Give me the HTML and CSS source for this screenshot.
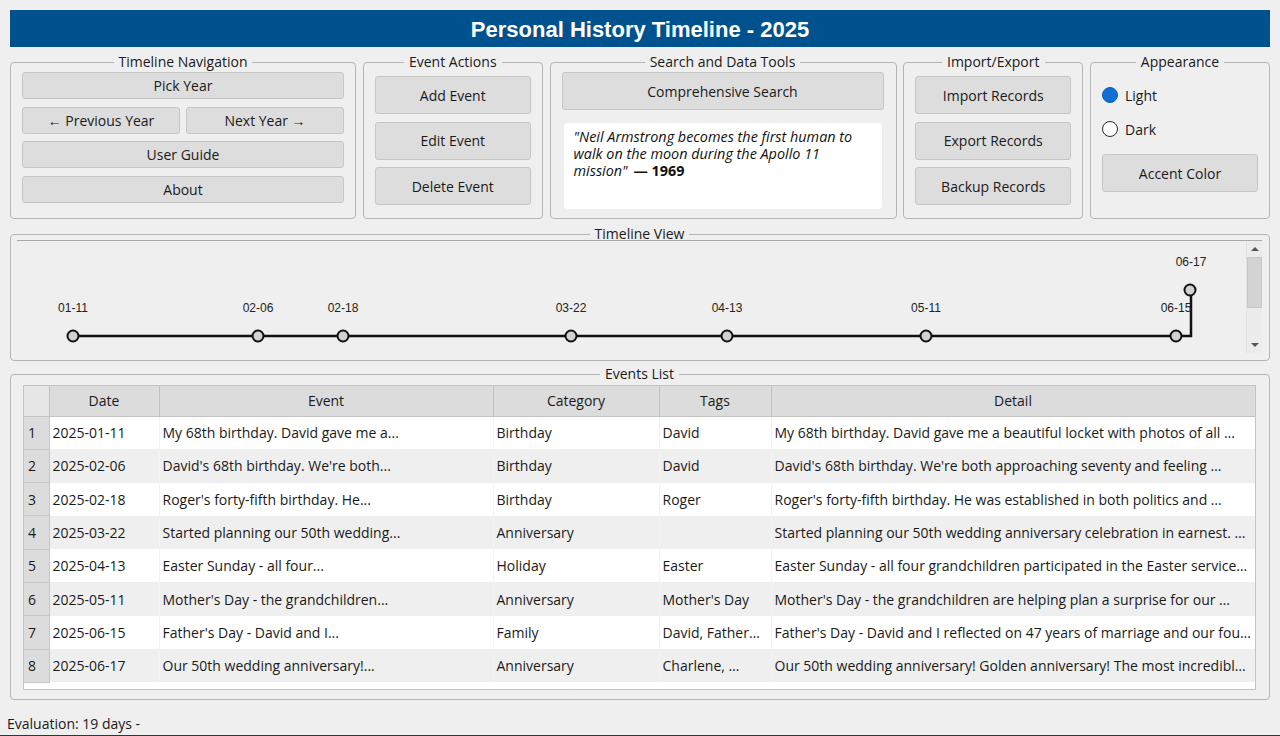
FILE: index.html
```html
<!DOCTYPE html>
<html>
<head>
<meta charset="utf-8">
<title>Personal History Timeline - 2025</title>
<link rel="stylesheet" href="styles.css">
</head>
<body>
<div class="app">
  <header class="titlebar">Personal History Timeline - 2025</header>

  <div class="toprow">
    <fieldset class="group nav">
      <legend>Timeline Navigation</legend>
      <button class="btn h27">Pick Year</button>
      <div class="pair">
        <button class="btn h27">← Previous Year</button>
        <button class="btn h27">Next Year →</button>
      </div>
      <button class="btn h27">User Guide</button>
      <button class="btn h27">About</button>
    </fieldset>

    <fieldset class="group actions">
      <legend>Event Actions</legend>
      <button class="btn h38">Add Event</button>
      <button class="btn h38">Edit Event</button>
      <button class="btn h38">Delete Event</button>
    </fieldset>

    <fieldset class="group search">
      <legend>Search and Data Tools</legend>
      <button class="btn h38">Comprehensive Search</button>
      <div class="quote"><span>"Neil Armstrong becomes the first human to walk on the moon during the Apollo 11</span> <span>mission"</span> <strong>— 1969</strong></div>
    </fieldset>

    <fieldset class="group actions">
      <legend>Import/Export</legend>
      <button class="btn h38">Import Records</button>
      <button class="btn h38">Export Records</button>
      <button class="btn h38">Backup Records</button>
    </fieldset>

    <fieldset class="group appearance">
      <legend>Appearance</legend>
      <label class="radio"><span class="dot on"></span>Light</label>
      <label class="radio"><span class="dot"></span>Dark</label>
      <button class="btn h38 accent">Accent Color</button>
    </fieldset>
  </div>

  <fieldset class="group timeline">
    <legend>Timeline View</legend>
    <div class="scrollarea">
      <svg class="tl" width="1229" height="111" viewBox="0 0 1229 111">
        <path d="M56 95 H1174 V49" fill="none" stroke="#111" stroke-width="2.5"/>
        <g fill="#d2d2d2" stroke="#111" stroke-width="2">
          <circle cx="56" cy="95" r="5.5"/>
          <circle cx="241" cy="95" r="5.5"/>
          <circle cx="326" cy="95" r="5.5"/>
          <circle cx="554" cy="95" r="5.5"/>
          <circle cx="710" cy="95" r="5.5"/>
          <circle cx="909" cy="95" r="5.5"/>
          <circle cx="1159" cy="95" r="5.5"/>
          <circle cx="1173" cy="49" r="5.5"/>
        </g>
        <g class="lbl" text-anchor="middle">
          <text x="56" y="71">01-11</text>
          <text x="241" y="71">02-06</text>
          <text x="326" y="71">02-18</text>
          <text x="554" y="71">03-22</text>
          <text x="710" y="71">04-13</text>
          <text x="909" y="71">05-11</text>
          <text x="1159" y="71">06-15</text>
          <text x="1174" y="25">06-17</text>
        </g>
      </svg>
      <div class="vscroll">
        <div class="arrow up"></div>
        <div class="thumb"></div>
        <div class="track"></div>
        <div class="arrow down"></div>
      </div>
    </div>
  </fieldset>

  <fieldset class="group events">
    <legend>Events List</legend>
    <div class="tablewrap">
      <table class="grid">
        <colgroup>
          <col class="c-num"><col class="c-date"><col class="c-event"><col class="c-cat"><col class="c-tags"><col class="c-detail">
        </colgroup>
        <thead>
          <tr><th class="corner"></th><th>Date</th><th>Event</th><th>Category</th><th>Tags</th><th>Detail</th></tr>
        </thead>
        <tbody>
          <tr><th>1</th><td>2025-01-11</td><td>My 68th birthday. David gave me a...</td><td>Birthday</td><td>David</td><td>My 68th birthday. David gave me a beautiful locket with photos of all …</td></tr>
          <tr class="alt"><th>2</th><td>2025-02-06</td><td>David's 68th birthday. We're both...</td><td>Birthday</td><td>David</td><td>David's 68th birthday. We're both approaching seventy and feeling …</td></tr>
          <tr><th>3</th><td>2025-02-18</td><td>Roger's forty-fifth birthday. He...</td><td>Birthday</td><td>Roger</td><td>Roger's forty-fifth birthday. He was established in both politics and …</td></tr>
          <tr class="alt"><th>4</th><td>2025-03-22</td><td>Started planning our 50th wedding...</td><td>Anniversary</td><td></td><td>Started planning our 50th wedding anniversary celebration in earnest. …</td></tr>
          <tr><th>5</th><td>2025-04-13</td><td>Easter Sunday - all four...</td><td>Holiday</td><td>Easter</td><td>Easter Sunday - all four grandchildren participated in the Easter service…</td></tr>
          <tr class="alt"><th>6</th><td>2025-05-11</td><td>Mother's Day - the grandchildren...</td><td>Anniversary</td><td>Mother's Day</td><td>Mother's Day - the grandchildren are helping plan a surprise for our …</td></tr>
          <tr><th>7</th><td>2025-06-15</td><td>Father's Day - David and I...</td><td>Family</td><td>David, Father…</td><td>Father's Day - David and I reflected on 47 years of marriage and our fou…</td></tr>
          <tr class="alt"><th>8</th><td>2025-06-17</td><td>Our 50th wedding anniversary!...</td><td>Anniversary</td><td>Charlene, …</td><td>Our 50th wedding anniversary! Golden anniversary! The most incredibl…</td></tr>
        </tbody>
      </table>
    </div>
  </fieldset>

  <div class="statusbar">Evaluation: 19 days -</div>
</div>
</body>
</html>
```

FILE: styles.css
```css
* { box-sizing: border-box; }
html, body { margin: 0; padding: 0; }
body {
  width: 1280px;
  height: 736px;
  overflow: hidden;
  background: #efefef;
  font-family: "Open Sans", "Noto Sans", sans-serif;
  font-size: 14px;
  color: #1a1a1a;
}
.app {
  height: 736px;
  padding: 10px 10px 0;
  display: flex;
  flex-direction: column;
  border-bottom: 1px solid #333;
}
.titlebar {
  height: 37px;
  background: #00528f;
  color: #fff;
  font-family: "Liberation Sans", Arial, sans-serif;
  font-weight: bold;
  font-size: 22px;
  line-height: 39px;
  text-align: center;
  margin-bottom: 7px;
}

/* group boxes */
.group {
  margin: 0;
  border: 1px solid #b4b4b4;
  border-radius: 4px;
  min-width: 0;
}
.group > legend {
  margin: 0 auto;
  padding: 0 5px;
  font-size: 14px;
  line-height: 16px;
  color: #1a1a1a;
}

.toprow {
  display: grid;
  grid-template-columns: 346px 180px 347px 180px 180px;
  column-gap: 6.75px;
  height: 165px;
}

.btn {
  display: block;
  width: 100%;
  margin: 0;
  font-family: inherit;
  font-size: 14px;
  color: #1a1a1a;
  background: #dddddd;
  border: 1px solid #c6c6c6;
  border-radius: 3px;
  padding: 0;
}
.h27 { height: 27px; }
.h38 { height: 38px; }

.nav {
  padding: 2px 11px 0;
  display: flex;
  flex-direction: column;
  gap: 7.67px;
}
.pair {
  display: grid;
  grid-template-columns: 1fr 1fr;
  column-gap: 6px;
}

.actions {
  padding: 6px 11px 0;
}
.actions .btn + .btn { margin-top: 7.5px; }

.search {
  padding: 2px 12px 0 11px;
}
.quote {
  margin: 13px 2px 0;
  height: 86px;
  background: #fff;
  border-radius: 4px;
  padding: 5px 22px 3px 10px;
  font-size: 14.4px;
  font-style: italic;
  line-height: 17px;
  color: #111;
}
.quote strong {
  font-style: normal;
  font-weight: bold;
  margin-left: 2px;
}

.appearance {
  padding: 16px 11px 0;
}
.radio {
  display: flex;
  align-items: center;
  height: 18px;
  gap: 7px;
  margin-bottom: 16px;
  font-size: 14px;
}
.dot {
  width: 16px;
  height: 16px;
  border-radius: 50%;
  border: 1.5px solid #2a2a2a;
  background: #fff;
  flex: none;
}
.dot.on {
  background: #0f6fd6;
  border-color: #0c5fb8;
}
.accent { margin-top: 2px; }

/* timeline */
.timeline {
  margin-top: 7px;
  padding: 0 7px 7px 6px;
}
.scrollarea {
  margin-top: -2px;
  border-top: 1px solid #a9a9a9;
  height: 113px;
  display: flex;
}
.tl { display: block; flex: none; }
.tl .lbl text {
  font-family: "Liberation Sans", Arial, sans-serif;
  font-size: 12px;
  fill: #222;
}
.vscroll {
  width: 16px;
  flex: none;
  display: flex;
  flex-direction: column;
  background: #ebebeb;
  border-left: 1px solid #e2e2e2;
}
.arrow {
  height: 16px;
  position: relative;
  background: #ececec;
}
.arrow::after {
  content: "";
  position: absolute;
  left: 4px;
  top: 6px;
  border-left: 4px solid transparent;
  border-right: 4px solid transparent;
}
.arrow.up::after { border-bottom: 4px solid #555; }
.arrow.down::after { border-top: 4px solid #555; }
.thumb {
  height: 51px;
  background: #d3d3d3;
  border: 1px solid #c8c8c8;
}
.track { flex: 1; background: #ececec; }

/* events list */
.events {
  margin-top: 5px;
  padding: 3px 13px 9px 12px;
}
.tablewrap {
  height: 305px;
  background: #fff;
  border: 1px solid #c4c4c4;
  overflow: hidden;
}
.grid {
  width: 1231px;
  table-layout: fixed;
  border-collapse: collapse;
  font-size: 14px;
}
.c-num { width: 25px; }
.c-date { width: 110px; }
.c-event { width: 334px; }
.c-cat { width: 166px; }
.c-tags { width: 112px; }
.c-detail { width: 484px; }
.grid thead th {
  height: 30px;
  background: #dcdcdc;
  border: 1px solid #c2c2c2;
  border-top: none;
  font-weight: normal;
  text-align: center;
  padding: 0;
}
.grid thead th.corner { background: #e6e6e6; border-left: none; }
.grid tbody tr { height: 33.3px; background: #fff; }
.grid tbody tr.alt { background: #efefef; }
.grid tbody th {
  background: #dcdcdc;
  border: 1px solid #c6c6c6;
  border-left: none;
  font-weight: normal;
  text-align: left;
  padding: 0 0 0 4px;
}
.grid td {
  padding: 0 3px;
  white-space: nowrap;
  overflow: hidden;
  text-overflow: ellipsis;
  border-right: 1px solid #f3f3f3;
}

.statusbar {
  flex: 1;
  display: flex;
  align-items: center;
  margin-left: -3px;
  padding-top: 11px;
  font-size: 14px;
}
```
